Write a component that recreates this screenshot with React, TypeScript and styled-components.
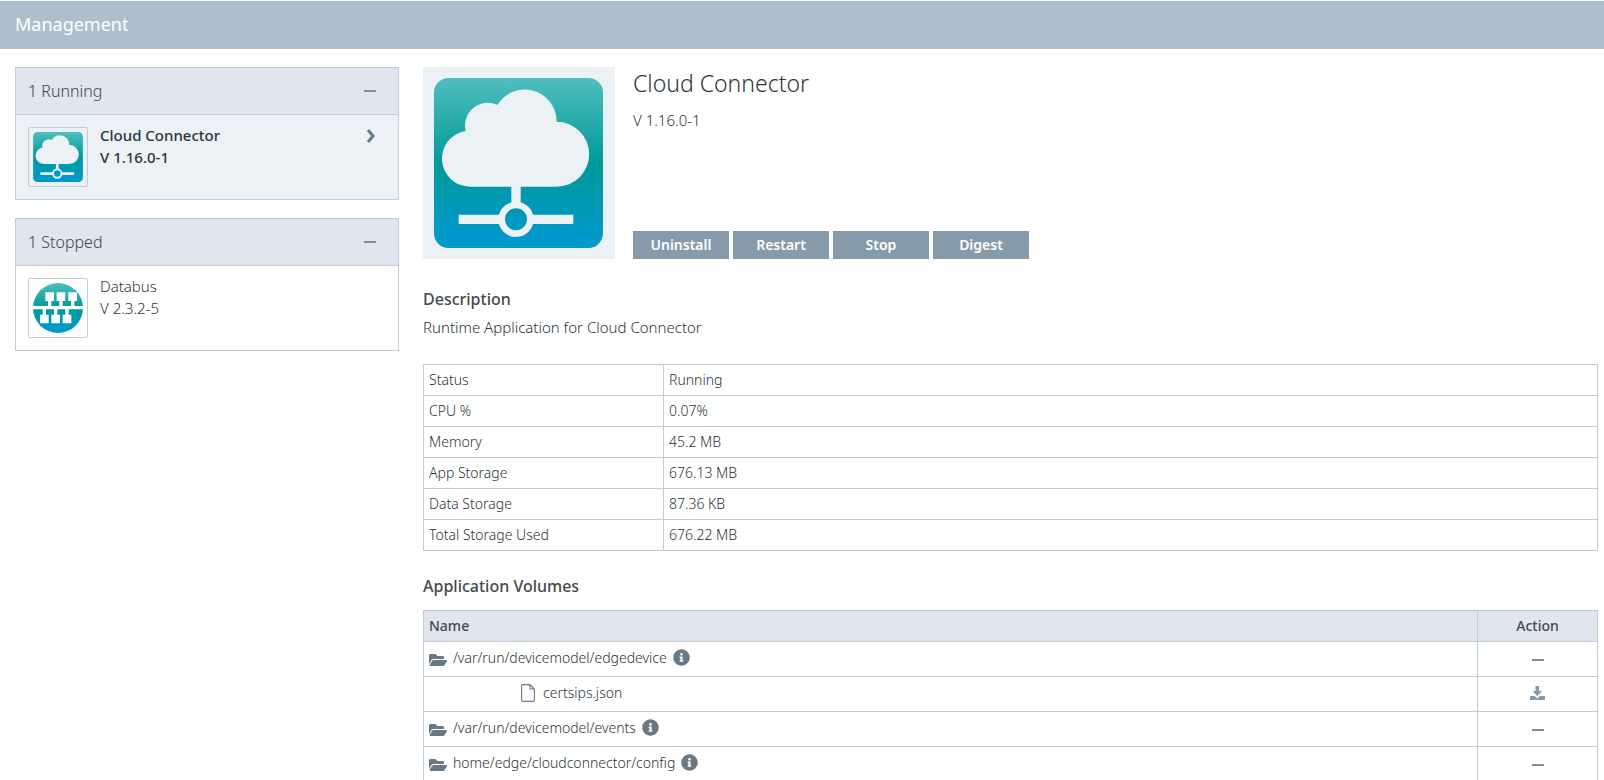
import React, { useId, useState } from 'react';
import styled, { createGlobalStyle } from 'styled-components';
import { FaFolderOpen, FaInfoCircle } from 'react-icons/fa';

const GlobalStyle = createGlobalStyle`
  *, *::before, *::after { box-sizing: border-box; }
  body {
    margin: 0;
    background: #fff;
    color: #2b353c;
    font-family: "Noto Sans", "Open Sans", sans-serif;
    font-size: 15px;
    font-weight: 300;
    line-height: 22px;
  }
  h1, h2, h3, p, ul { margin: 0; padding: 0; }
  button { font: inherit; color: inherit; cursor: pointer; }
`;

const line = '#becdd9';

const PageHeader = styled.header`
  display: flex;
  align-items: center;
  height: 48px;
  margin-top: 1px;
  padding: 0 15px 2px;
  background: #aebfcb;
`;

const PageTitle = styled.h1`
  color: #fff;
  font-size: 18px;
  font-weight: 400;
  line-height: 24px;
`;

const Layout = styled.div`
  display: flex;
  align-items: flex-start;
  gap: 24px;
  padding: 18px 6px 0 15px;
`;

const Sidebar = styled.aside`
  display: flex;
  flex: 0 0 384px;
  flex-direction: column;
  gap: 18px;
`;

const Panel = styled.section`
  border: 1px solid ${line};
`;

const PanelHeader = styled.h2`
  display: flex;
  align-items: center;
  justify-content: space-between;
  height: 47px;
  padding: 0 22px 0 12px;
  border-bottom: 1px solid ${line};
  background: #dfe6ee;
  color: #3e454b;
  font-size: 16px;
  font-weight: 300;
`;

const CollapseButton = styled.button`
  display: flex;
  align-items: center;
  height: 24px;
  padding: 0;
  border: 0;
  background: none;
`;

const Dash = styled.span`
  display: inline-block;
  width: 12px;
  height: 2px;
  background: #7d8f9d;
  vertical-align: middle;
`;

const AppEntry = styled.button<{ $selected?: boolean }>`
  display: flex;
  align-items: flex-start;
  gap: 12px;
  width: 100%;
  padding: 12px 22px 12px 12px;
  border: 0;
  background: ${(p) => (p.$selected ? '#ebf1f5' : '#fff')};
  font-weight: ${(p) => (p.$selected ? 500 : 300)};
  text-align: left;
`;

const Thumb = styled.span`
  display: flex;
  align-items: center;
  justify-content: center;
  width: 60px;
  height: 60px;
  border: 1px solid ${line};
  border-radius: 2px;

  svg { width: 50px; height: 50px; }
`;

const EntryText = styled.span`
  display: flex;
  flex: 1;
  flex-direction: column;
  margin-top: -3px;
`;

const Chevron = styled.svg`
  width: 10px;
  height: 16px;
  margin-top: 1px;
`;

const Detail = styled.main`
  flex: 1;
  min-width: 0;
`;

const Summary = styled.section`
  display: flex;
  gap: 18px;
`;

const HeroIcon = styled.div`
  display: flex;
  align-items: center;
  justify-content: center;
  width: 192px;
  height: 192px;
  padding: 0 1px 1px 0;
  background: #ebf1f5;

  svg { width: 169px; height: 170px; }
`;

const SummaryText = styled.div`
  display: flex;
  flex-direction: column;
`;

const AppName = styled.h2`
  font-size: 23px;
  font-weight: 300;
  line-height: 32px;
`;

const Version = styled.p`
  margin-top: 10px;
`;

const Actions = styled.div`
  display: flex;
  gap: 4px;
  margin-top: auto;
`;

const ActionButton = styled.button`
  width: 96px;
  height: 28px;
  padding: 0 0 1px;
  border: 0;
  background: #879aaa;
  color: #fff;
  font-size: 14px;
  font-weight: 600;
`;

const SectionTitle = styled.h3`
  color: #45494d;
  font-size: 16px;
  font-weight: 500;
  line-height: 24px;
`;

const Description = styled.section`
  margin: 28px 0 26px;

  p { margin-top: 5px; }
`;

const Table = styled.table`
  width: 100%;
  border-collapse: collapse;
  table-layout: fixed;
  font-size: 14px;
  line-height: 20px;

  th, td {
    height: 31px;
    padding: 0 5px;
    border: 1px solid ${line};
    font-weight: 300;
    text-align: left;
  }
`;

const StatsTable = styled(Table)`
  margin-bottom: 23px;

  th { width: 240px; }
`;

const VolumesTable = styled(Table)`
  margin-top: 12px;

  thead th {
    background: #dfe6ee;
    color: #45494d;
    font-weight: 500;
  }
  tbody td { height: 35px; }
  th:last-child, td:last-child {
    width: 120px;
    text-align: center;
  }
`;

const PathCell = styled.div<{ $nested?: boolean }>`
  display: flex;
  align-items: center;
  gap: 6px;
  padding-bottom: 3px;
  padding-left: ${(p) => (p.$nested ? 92 : 0)}px;
`;

const FolderIcon = styled(FaFolderOpen)`
  width: 18px;
  height: 16px;
  margin-top: 4px;
  color: #687884;
`;

const InfoButton = styled.button`
  display: flex;
  padding: 0;
  border: 0;
  background: none;

  svg { width: 17px; height: 17px; color: #687884; }
`;

const FileIcon = styled.svg`
  width: 14px;
  height: 18px;
  margin-right: 2px;
`;

const DownloadLink = styled.a`
  display: flex;
  justify-content: center;
  padding-bottom: 3px;

  svg { width: 15px; height: 14px; }
`;

function Gradient({ id }: { id: string }) {
  return (
    <defs>
      <linearGradient id={id} x1="0" y1="0" x2="0" y2="1">
        <stop offset="0" stopColor="#50bebe" />
        <stop offset="0.5" stopColor="#009999" />
        <stop offset="0.95" stopColor="#0099cc" />
      </linearGradient>
    </defs>
  );
}

function CloudIcon() {
  const id = useId();
  return (
    <svg viewBox="57 68 507 510" aria-hidden="true">
      <Gradient id={id} />
      <rect x="57" y="68" width="507" height="510" rx="44" fill={`url(#${id})`} />
      <path
        fill="#ebf1f5"
        d="M166 394A84 84 0 0 1 152 227A68 68 0 0 1 247 149A96 96 0 0 1 425 199A97.5 97.5 0 0 1 425 394Z"
      />
      <path fill="#ebf1f5" d="M289 390H317V445H289ZM131 478H260V506H131ZM346 478H475V506H346Z" />
      <circle cx="303" cy="492" r="43" fill="none" stroke="#ebf1f5" strokeWidth="20" />
    </svg>
  );
}

function DatabusIcon() {
  const id = useId();
  return (
    <svg viewBox="39 40 150 150" aria-hidden="true">
      <Gradient id={id} />
      <circle cx="114" cy="115" r="75" fill={`url(#${id})`} />
      <path fill="#fff" d="M39 109H189V119H39Z" />
      {[76, 110, 145].map((x) => (
        <path key={x} fill="#fff" d={`M${x} 68h26v26h-8v16h-10v-16h-8z`} />
      ))}
      {[60, 94, 128].map((x) => (
        <path key={x} fill="#fff" d={`M${x} 161h26v-26h-8v-17h-10v17h-8z`} />
      ))}
    </svg>
  );
}

const panels = [
  { label: '1 Running', name: 'Cloud Connector', version: 'V 1.16.0-1', selected: true, Icon: CloudIcon },
  { label: '1 Stopped', name: 'Databus', version: 'V 2.3.2-5', selected: false, Icon: DatabusIcon },
];

const stats = [
  ['Status', 'Running'],
  ['CPU %', '0.07%'],
  ['Memory', '45.2 MB'],
  ['App Storage', '676.13 MB'],
  ['Data Storage', '87.36 KB'],
  ['Total Storage Used', '676.22 MB'],
];

const volumes = [
  { name: '/var/run/devicemodel/edgedevice', file: false },
  { name: 'certsips.json', file: true },
  { name: '/var/run/devicemodel/events', file: false },
  { name: 'home/edge/cloudconnector/config', file: false },
];

function AppPanel({ label, name, version, selected, Icon }: (typeof panels)[number]) {
  const [open, setOpen] = useState(true);
  return (
    <Panel>
      <PanelHeader>
        {label}
        <CollapseButton aria-label={`Toggle ${label}`} aria-expanded={open} onClick={() => setOpen(!open)}>
          <Dash />
        </CollapseButton>
      </PanelHeader>
      {open && (
        <AppEntry $selected={selected}>
          <Thumb>
            <Icon />
          </Thumb>
          <EntryText>
            <span>{name}</span>
            <span>{version}</span>
          </EntryText>
          {selected && (
            <Chevron viewBox="0 0 10 16" aria-hidden="true">
              <path d="M2 2L7 8L2 14" fill="none" stroke="#687884" strokeWidth="3" />
            </Chevron>
          )}
        </AppEntry>
      )}
    </Panel>
  );
}

export default function App() {
  return (
    <>
      <GlobalStyle />
      <PageHeader>
        <PageTitle>Management</PageTitle>
      </PageHeader>
      <Layout>
        <Sidebar>
          {panels.map((panel) => (
            <AppPanel key={panel.label} {...panel} />
          ))}
        </Sidebar>
        <Detail>
          <Summary>
            <HeroIcon>
              <CloudIcon />
            </HeroIcon>
            <SummaryText>
              <AppName>Cloud Connector</AppName>
              <Version>V 1.16.0-1</Version>
              <Actions>
                {['Uninstall', 'Restart', 'Stop', 'Digest'].map((action) => (
                  <ActionButton key={action}>{action}</ActionButton>
                ))}
              </Actions>
            </SummaryText>
          </Summary>
          <Description>
            <SectionTitle>Description</SectionTitle>
            <p>Runtime Application for Cloud Connector</p>
          </Description>
          <StatsTable>
            <tbody>
              {stats.map(([label, value]) => (
                <tr key={label}>
                  <th scope="row">{label}</th>
                  <td>{value}</td>
                </tr>
              ))}
            </tbody>
          </StatsTable>
          <SectionTitle>Application Volumes</SectionTitle>
          <VolumesTable>
            <thead>
              <tr>
                <th scope="col">Name</th>
                <th scope="col">Action</th>
              </tr>
            </thead>
            <tbody>
              {volumes.map(({ name, file }) => (
                <tr key={name}>
                  <td>
                    <PathCell $nested={file}>
                      {file ? (
                        <FileIcon viewBox="0 0 14 18" aria-hidden="true">
                          <path
                            d="M1.5 .6H9L13.4 5V16.5Q13.4 17.4 12.5 17.4H1.5Q.6 17.4 .6 16.5V1.5Q.6 .6 1.5 .6ZM9 .6V5H13.4"
                            fill="none"
                            stroke="#687884"
                            strokeWidth="1.1"
                          />
                        </FileIcon>
                      ) : (
                        <FolderIcon aria-hidden="true" />
                      )}
                      <span>{name}</span>
                      {!file && (
                        <InfoButton aria-label={`About ${name}`}>
                          <FaInfoCircle />
                        </InfoButton>
                      )}
                    </PathCell>
                  </td>
                  <td>
                    {file ? (
                      <DownloadLink href="#download" aria-label={`Download ${name}`}>
                        <svg viewBox="0 0 15 14" aria-hidden="true">
                          <path d="M5.5 0H9V5H12L7.3 10.2L2.5 5H5.5Z" fill="#879aaa" />
                          <path d="M0 10H4.6L7.3 12.4L10 10H15V14H0Z" fill="#879aaa" />
                        </svg>
                      </DownloadLink>
                    ) : (
                      <Dash />
                    )}
                  </td>
                </tr>
              ))}
            </tbody>
          </VolumesTable>
        </Detail>
      </Layout>
    </>
  );
}
